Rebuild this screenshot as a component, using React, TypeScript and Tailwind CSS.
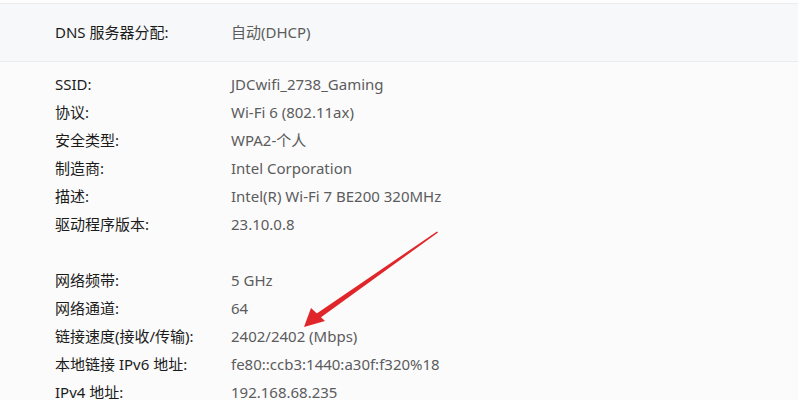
const font = { fontFamily: '"Noto Sans", "Noto Sans CJK SC", sans-serif' };

type Row = [string, string];

const group1: Row[] = [
  ["SSID:", "JDCwifi_2738_Gaming"],
  ["协议:", "Wi-Fi 6 (802.11ax)"],
  ["安全类型:", "WPA2-个人"],
  ["制造商:", "Intel Corporation"],
  ["描述:", "Intel(R) Wi-Fi 7 BE200 320MHz"],
  ["驱动程序版本:", "23.10.0.8"],
];

const group2: Row[] = [
  ["网络频带:", "5 GHz"],
  ["网络通道:", "64"],
  ["链接速度(接收/传输):", "2402/2402 (Mbps)"],
  ["本地链接 IPv6 地址:", "fe80::ccb3:1440:a30f:f320%18"],
  ["IPv4 地址:", "192.168.68.235"],
];

const InfoRow = ({ label, value }: { label: string; value: string }) => (
  <div className="flex h-[28px] items-center">
    <div className="w-[176px] shrink-0 text-[#1b1b1b]">{label}</div>
    <div className="text-[#5c5c5c]">{value}</div>
  </div>
);

const Arrow = () => (
  <svg
    className="pointer-events-none absolute left-0 top-0"
    width="798"
    height="400"
    viewBox="0 0 798 400"
  >
    <polygon points="437,231.5 438,232.5 320,318 316,314" fill="#e0262a" />
    <polygon points="304,327 311,308 325,321" fill="#e0262a" />
  </svg>
);

export default function App() {
  return (
    <div
      className="relative h-[400px] w-[798px] overflow-hidden bg-[#fbfbfc] text-[15px]"
      style={font}
    >
      <div className="h-[3px] bg-[#fdfdfd]" />
      <div className="flex h-[59px] items-center border-y border-[#eaecee] bg-[#f6f8f9] pl-[55px]">
        <div className="w-[176px] shrink-0 text-[#1b1b1b]">DNS 服务器分配:</div>
        <div className="text-[#5c5c5c]">自动(DHCP)</div>
      </div>
      <div className="flex flex-col gap-[28px] pl-[55px] pt-[8px]">
        <div>
          {group1.map(([l, v]) => (
            <InfoRow key={l} label={l} value={v} />
          ))}
        </div>
        <div>
          {group2.map(([l, v]) => (
            <InfoRow key={l} label={l} value={v} />
          ))}
        </div>
      </div>
      <Arrow />
    </div>
  );
}
